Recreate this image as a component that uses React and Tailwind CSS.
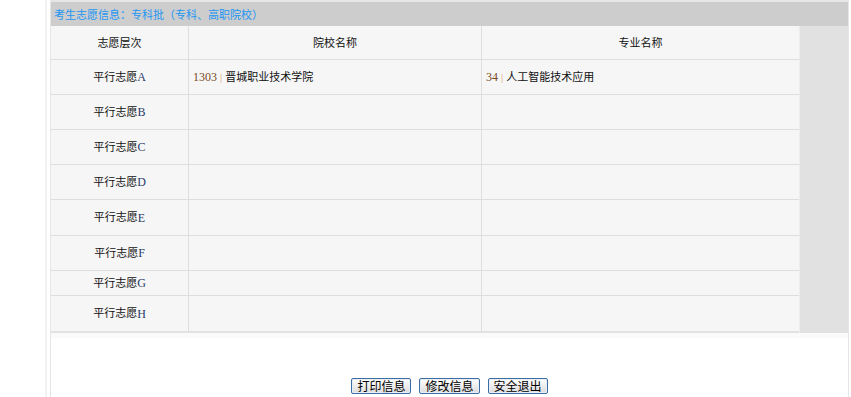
import React from 'react';

const rows = [
  { level: 'A', school: { code: '1303', name: '晋城职业技术学院' }, major: { code: '34', name: '人工智能技术应用' }, h: 'h-[35px]' },
  { level: 'B', h: 'h-[35px]' },
  { level: 'C', h: 'h-[35px]' },
  { level: 'D', h: 'h-[35px]' },
  { level: 'E', h: 'h-[36px]' },
  { level: 'F', h: 'h-[35px]' },
  { level: 'G', h: 'h-[25px]' },
  { level: 'H', h: 'h-[35px]' },
];

function Coded({ item }) {
  if (!item) return null;
  return (
    <span>
      <span className="text-[#7a4a1e] text-[12px]">{item.code}</span>
      <span className="text-[#e0a060] mx-[3px]">|</span>
      <span className="text-[#111]">{item.name}</span>
    </span>
  );
}

function Btn({ children }) {
  return (
    <button className="h-[16px] px-[5px] text-[12px] leading-[14px] text-black border border-[#3c6ea5] rounded-[2px] bg-gradient-to-b from-[#ffffff] to-[#dcdcdc] shadow-[inset_0_0_0_1px_#e8eef6]">
      {children}
    </button>
  );
}

export default function App() {
  return (
    <div className="w-[851px] h-[397px] bg-white flex font-['Liberation_Serif','Noto_Sans_CJK_SC',serif] text-[11px] text-[#111] overflow-hidden">
      <div className="w-[45px]" />
      <div className="w-[2px] bg-[#f2f2f2]" />
      <div className="w-[3px]" />
      <div className="w-[799px] flex flex-col border-l border-r border-[#e6e6e6]">
        <div className="h-[2px] bg-[#e6e6e6]" />
        <div className="h-[24px] bg-[#cdcdcd] flex items-center pl-[3px] text-[#2196f3] font-['Noto_Sans_CJK_SC',sans-serif] text-[11px]">
          考生志愿信息：专科批（专科、高职院校）
        </div>
        <div className="flex">
          <div className="w-[748px] bg-[#f6f6f6] border-b-2 border-[#e2e2e2]">
            <div className="grid grid-cols-[138px_293px_317px] h-[34px] border-b border-[#dedede] font-['Noto_Sans_CJK_SC',sans-serif]">
              <div className="flex items-center justify-center border-r border-[#dedede]">志愿层次</div>
              <div className="flex items-center justify-center border-r border-[#dedede]">院校名称</div>
              <div className="flex items-center justify-center">专业名称</div>
            </div>
            {rows.map((r, i) => (
              <div
                key={r.level}
                className={`grid grid-cols-[138px_293px_317px] ${r.h} ${i < rows.length - 1 ? 'border-b border-[#dedede]' : ''}`}
              >
                <div className="flex items-center justify-center border-r border-[#dedede]">
                  平行志愿<span className="text-[#2a3a66] text-[12px]">{r.level}</span>
                </div>
                <div className="flex items-center pl-[4px] border-r border-[#dedede]">
                  <Coded item={r.school} />
                </div>
                <div className="flex items-center pl-[4px]">
                  <Coded item={r.major} />
                </div>
              </div>
            ))}
          </div>
          <div className="flex-1 bg-[#e1e1e1] border-l border-[#ececec]" />
        </div>
        <div className="h-[5px] bg-[#fafafa]" />
        <div className="flex justify-center gap-[8px] pt-[40px] font-['Noto_Sans_CJK_SC',sans-serif]">
          <Btn>打印信息</Btn>
          <Btn>修改信息</Btn>
          <Btn>安全退出</Btn>
        </div>
      </div>
    </div>
  );
}
